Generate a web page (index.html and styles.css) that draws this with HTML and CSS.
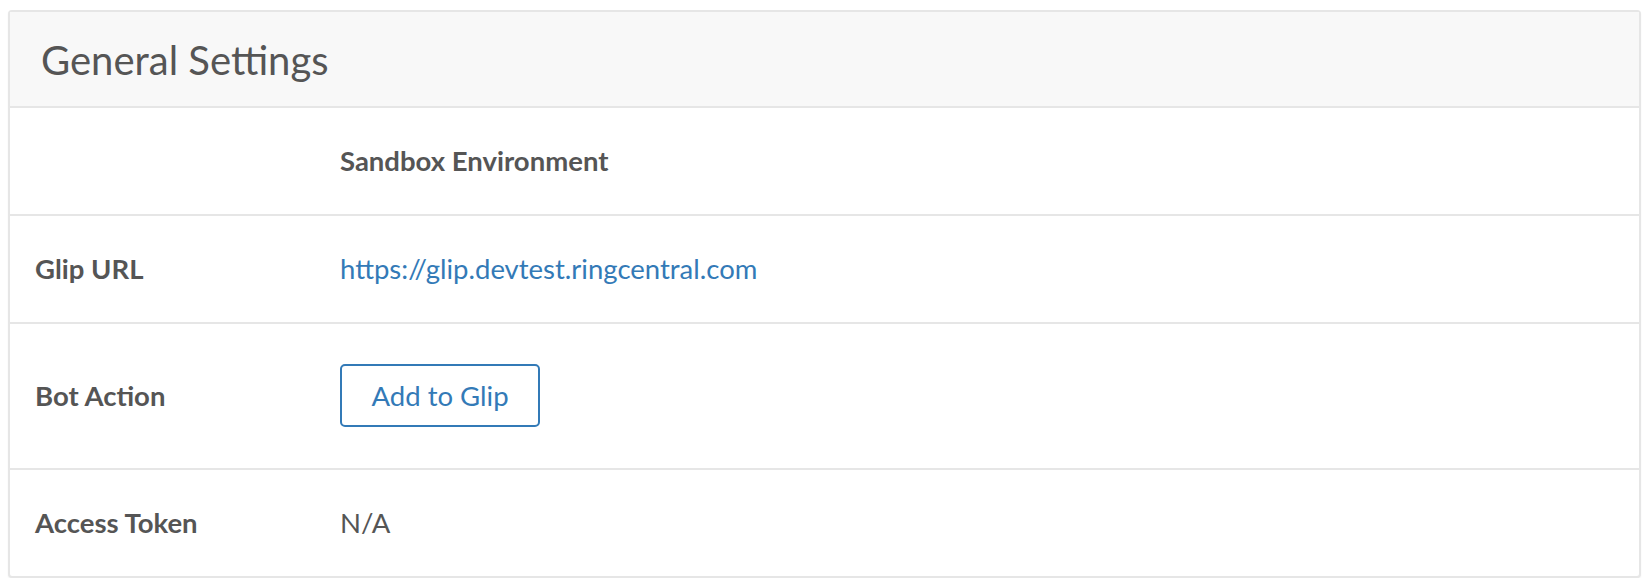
FILE: index.html
```html
<!DOCTYPE html>
<html>
<head>
<meta charset="utf-8">
<link rel="stylesheet" href="styles.css">
</head>
<body>
<div class="panel">
  <div class="panel-heading">
    <h1 class="panel-title">General Settings</h1>
  </div>
  <div class="row">
    <div class="label"></div>
    <div class="value strong">Sandbox Environment</div>
  </div>
  <div class="row">
    <div class="label">Glip URL</div>
    <div class="value"><a class="link" href="#">https://glip.devtest.ringcentral.com</a></div>
  </div>
  <div class="row row-btn">
    <div class="label">Bot Action</div>
    <div class="value"><button class="btn">Add to Glip</button></div>
  </div>
  <div class="row row-last">
    <div class="label">Access Token</div>
    <div class="value">N/A</div>
  </div>
</div>
</body>
</html>
```
FILE: styles.css
```css
html, body {
  margin: 0;
  background: #ffffff;
}
body {
  padding: 10px 11px 0 8px;
  font-family: Lato, "Liberation Sans", sans-serif;
  color: #555555;
}
.panel {
  border: 2px solid #e6e6e6;
  border-radius: 4px;
  box-shadow: 0 1px 2px rgba(0,0,0,0.06);
  background: #fff;
}
.panel-heading {
  background: #f8f8f8;
  border-bottom: 2px solid #e6e6e6;
  padding: 24px 31px 22px;
}
.panel-title {
  margin: 0;
  font-size: 40px;
  line-height: 48px;
  font-weight: 400;
  color: #555555;
}
.row {
  display: grid;
  grid-template-columns: 305px 1fr;
  align-items: center;
  padding: 33px 25px;
  border-bottom: 2px solid #e6e6e6;
  font-size: 27.5px;
  line-height: 40px;
}
.row-btn {
  padding: 40px 25px 41px;
}
.row-last {
  border-bottom: none;
}
.label {
  font-weight: 700;
  color: #555555;
}
.value {
  font-weight: 400;
  color: #555555;
}
.strong {
  font-weight: 700;
}
.link {
  color: #337ab7;
  text-decoration: none;
}
.btn {
  font-family: Lato, "Liberation Sans", sans-serif;
  font-size: 27.5px;
  font-weight: 400;
  line-height: 59px;
  height: 63px;
  padding: 0 29.5px;
  border: 2px solid #337ab7;
  border-radius: 5px;
  background: #fff;
  color: #337ab7;
  display: block;
}
```
